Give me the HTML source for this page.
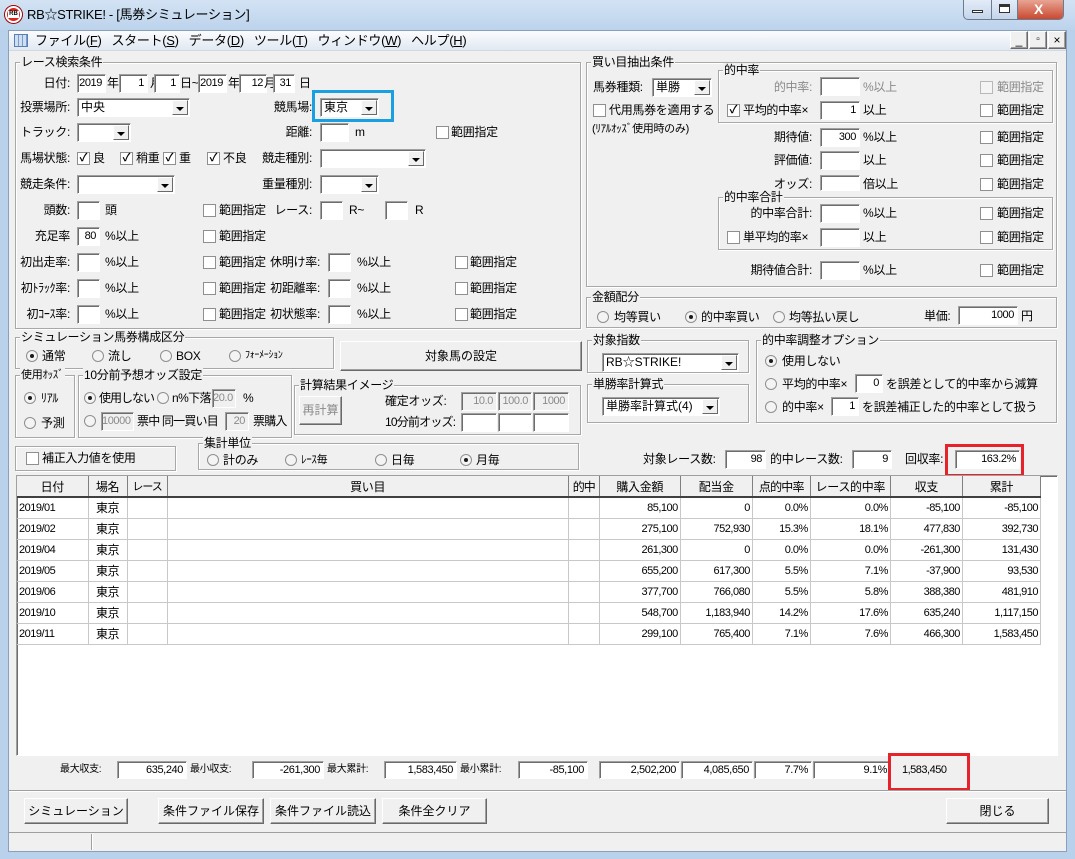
<!DOCTYPE html>
<html><head><meta charset="utf-8">
<style>
*{margin:0;padding:0;box-sizing:border-box}
body{width:1075px;height:859px;overflow:hidden;background:#b9d1ea;font-family:"Liberation Sans","Noto Sans CJK JP",sans-serif;font-size:12px;color:#000;position:relative}
.a{position:absolute}
.t{position:absolute;white-space:nowrap;font-size:12px;line-height:14px;letter-spacing:-0.3px}
.rl{text-align:right}
.gr{color:#8a8a8a}
.b{position:absolute;background:#fff;border:1px solid;border-color:#a0a0a0 #fff #fff #a0a0a0;box-shadow:inset 1px 1px #6d6d6d;text-align:right;padding-right:3px;font-size:11px;line-height:17px;height:19px;white-space:nowrap;letter-spacing:-0.4px;overflow:hidden}
.b.d{background:#f0f0f0;color:#8a8a8a}
.c{position:absolute;background:#fff;border:1px solid;border-color:#a0a0a0 #fff #fff #a0a0a0;box-shadow:inset 1px 1px #6d6d6d;height:19px;padding-left:3px;line-height:17px;font-size:12px;white-space:nowrap}
.c i{position:absolute;right:1px;top:1px;bottom:1px;width:16px;background:#f0f0f0;border:1px solid;border-color:#fff #696969 #696969 #fff}
.c i:after{content:"";position:absolute;left:3px;top:6px;border-left:4px solid transparent;border-right:4px solid transparent;border-top:4px solid #000}
.k{position:absolute;width:13px;height:13px;background:#fff;border:1px solid #8e8f8f;font-size:11px;line-height:11px;text-align:center;font-weight:bold}
.k.d{background:#f4f4f4;border-color:#b8b8b8}
.r{position:absolute;width:12px;height:12px;border-radius:50%;background:#f4f4f4;border:1px solid #8e8f8f}
.r.on:after{content:"";position:absolute;left:3px;top:3px;width:4px;height:4px;border-radius:50%;background:#1a1a1a}
.g{position:absolute;border:1px solid #a8a8a8;box-shadow:1px 1px 0 #fff, inset 1px 1px 0 #fff}
.g>span{position:absolute;top:-8px;left:4px;background:#f0f0f0;padding:0 1px;font-size:12px;line-height:14px;white-space:nowrap;letter-spacing:-0.3px}
.btn{position:absolute;background:#f0f0f0;border:1px solid;border-color:#fff #696969 #696969 #fff;box-shadow:inset -1px -1px #a0a0a0;text-align:center;font-size:12px;white-space:nowrap}
table{border-collapse:collapse;table-layout:fixed}
td,th{height:21px;font-size:11px;font-weight:normal;white-space:nowrap;overflow:hidden;padding:0 2px;letter-spacing:-0.5px}
th{background:#f0f0f0;border-right:1px solid #808080;border-bottom:2px solid #404040;text-align:center;font-size:12px;letter-spacing:-0.3px}
td{border-right:1px solid #c8c8c8;border-bottom:1px solid #c8c8c8;text-align:right}
td.l{text-align:left}
td.cn{text-align:center;font-size:12px}
</style></head><body>
<div class="a" style="left:0;top:0;width:1075px;height:30px;background:linear-gradient(#d3e3f4,#bcd3ec)"></div>
<div class="a" style="left:5px;top:6px;width:17px;height:17px;border-radius:50%;background:#d22;border:2px solid #fff;box-shadow:0 0 0 1px #900"></div>
<div class="a" style="left:8px;top:11px;width:11px;height:7px;background:#fff;font-size:6px;line-height:7px;text-align:center;font-weight:bold">RB</div>
<div class="t" style="left:27px;top:7px;font-size:13px;line-height:16px">RB☆STRIKE! - [馬券シミュレーション]</div>
<div class="a" style="left:963px;top:0;width:101px;height:20px;border:1px solid #6b7c91;border-top:none;border-radius:0 0 5px 5px;overflow:hidden;background:linear-gradient(#e3ecf7,#c4d5ea)">
 <div class="a" style="left:27px;top:0;width:1px;height:20px;background:#6b7c91"></div>
 <div class="a" style="left:53px;top:0;width:1px;height:20px;background:#6b7c91"></div>
 <div class="a" style="left:54px;top:0;width:47px;height:20px;background:linear-gradient(#e8a494,#c7442a)"></div>
 <div class="a" style="left:8px;top:10px;width:11px;height:3px;border:1px solid #333;background:#fff"></div>
 <div class="a" style="left:35px;top:4px;width:11px;height:9px;border:1px solid #333;border-top-width:3px;background:#fff"></div>
 <div class="t" style="left:70px;top:2px;color:#fff;font-weight:bold;font-size:14px">X</div>
</div>
<div class="a" style="left:8px;top:30px;width:1059px;height:822px;background:#f0f0f0;border:1px solid #8aa0b8"></div>
<div class="a" style="left:9px;top:31px;width:1057px;height:20px;background:linear-gradient(#fbfcfe,#e1e8f2);border-bottom:1px solid #d0d8e2"></div>
<div class="a" style="left:14px;top:34px;width:14px;height:13px;border:1px solid #5a7fb5;background:repeating-linear-gradient(90deg,#cfdff2 0 3px,#7a9cc9 3px 4px),#fff"></div>
<div class="t" style="left:35px;top:33px;font-size:13px;line-height:16px">ファイル(<u>F</u>)&nbsp;&nbsp; スタート(<u>S</u>)&nbsp;&nbsp; データ(<u>D</u>)&nbsp;&nbsp; ツール(<u>T</u>)&nbsp;&nbsp; ウィンドウ(<u>W</u>)&nbsp;&nbsp; ヘルプ(<u>H</u>)</div>
<div class="btn" style="left:1010px;top:31px;width:18px;height:18px;line-height:16px">_</div>
<div class="btn" style="left:1029px;top:31px;width:18px;height:18px;line-height:16px;font-size:10px">▫</div>
<div class="btn" style="left:1048px;top:31px;width:18px;height:18px;line-height:16px">×</div>

<div class="g" style="left:15px;top:62px;width:566px;height:267px"><span>レース検索条件</span></div>
<div class="t rl" style="left:10px;width:60px;top:76px">日付:</div>
<div class="b" style="left:77px;top:74px;width:29px">2019</div><div class="t" style="left:107px;top:76px">年</div>
<div class="b" style="left:119px;top:74px;width:29px">1</div><div class="t" style="left:150px;top:76px">月</div>
<div class="b" style="left:154px;top:74px;width:26px">1</div><div class="t" style="left:180px;top:76px">日~</div>
<div class="b" style="left:198px;top:74px;width:29px">2019</div><div class="t" style="left:228px;top:76px">年</div>
<div class="b" style="left:239px;top:74px;width:28px">12</div><div class="t" style="left:264px;top:76px">月</div>
<div class="b" style="left:273px;top:74px;width:22px">31</div><div class="t" style="left:299px;top:76px">日</div>

<div class="t rl" style="left:10px;width:60px;top:100px">投票場所:</div>
<div class="c" style="left:77px;top:98px;width:113px">中央<i></i></div>
<div class="t rl" style="left:250px;width:62px;top:100px">競馬場:</div>
<div class="c" style="left:320px;top:98px;width:59px">東京<i></i></div>
<div class="a" style="left:312px;top:90px;width:82px;height:32px;border:3px solid #1a9fe0"></div>

<div class="t rl" style="left:10px;width:60px;top:125px">トラック:</div>
<div class="c" style="left:77px;top:123px;width:54px"><i></i></div>
<div class="t rl" style="left:250px;width:62px;top:125px">距離:</div>
<div class="b" style="left:320px;top:123px;width:29px"></div><div class="t" style="left:355px;top:125px">m</div>
<div class="k" style="left:436px;top:126px"></div><div class="t" style="left:451px;top:125px">範囲指定</div>

<div class="t rl" style="left:10px;width:60px;top:151px">馬場状態:</div>
<div class="k" style="left:77px;top:152px">✓</div><div class="t" style="left:93px;top:151px">良</div>
<div class="k" style="left:120px;top:152px">✓</div><div class="t" style="left:136px;top:151px">稍重</div>
<div class="k" style="left:163px;top:152px">✓</div><div class="t" style="left:179px;top:151px">重</div>
<div class="k" style="left:207px;top:152px">✓</div><div class="t" style="left:223px;top:151px">不良</div>
<div class="t rl" style="left:250px;width:62px;top:151px">競走種別:</div>
<div class="c" style="left:320px;top:149px;width:106px"><i></i></div>

<div class="t rl" style="left:10px;width:60px;top:177px">競走条件:</div>
<div class="c" style="left:77px;top:175px;width:98px"><i></i></div>
<div class="t rl" style="left:250px;width:62px;top:177px">重量種別:</div>
<div class="c" style="left:320px;top:175px;width:59px"><i></i></div>

<div class="t rl" style="left:10px;width:60px;top:203px">頭数:</div>
<div class="b" style="left:77px;top:201px;width:23px"></div><div class="t" style="left:105px;top:203px">頭</div>
<div class="k" style="left:203px;top:204px"></div><div class="t" style="left:219px;top:203px">範囲指定</div>
<div class="t rl" style="left:250px;width:62px;top:203px">レース:</div>
<div class="b" style="left:320px;top:201px;width:23px"></div><div class="t" style="left:349px;top:203px">R~</div>
<div class="b" style="left:385px;top:201px;width:23px"></div><div class="t" style="left:415px;top:203px">R</div>

<div class="t rl" style="left:10px;width:60px;top:229px">充足率</div>
<div class="b" style="left:77px;top:227px;width:23px">80</div><div class="t" style="left:105px;top:229px">%以上</div>
<div class="k" style="left:203px;top:230px"></div><div class="t" style="left:219px;top:229px">範囲指定</div>

<div class="t rl" style="left:10px;width:60px;top:255px">初出走率:</div>
<div class="b" style="left:77px;top:253px;width:23px"></div><div class="t" style="left:105px;top:255px">%以上</div>
<div class="k" style="left:203px;top:256px"></div><div class="t" style="left:219px;top:255px">範囲指定</div>
<div class="t rl" style="left:258px;width:62px;top:255px">休明け率:</div>
<div class="b" style="left:328px;top:253px;width:23px"></div><div class="t" style="left:357px;top:255px">%以上</div>
<div class="k" style="left:455px;top:256px"></div><div class="t" style="left:470px;top:255px">範囲指定</div>

<div class="t rl" style="left:10px;width:60px;top:281px">初ﾄﾗｯｸ率:</div>
<div class="b" style="left:77px;top:279px;width:23px"></div><div class="t" style="left:105px;top:281px">%以上</div>
<div class="k" style="left:203px;top:282px"></div><div class="t" style="left:219px;top:281px">範囲指定</div>
<div class="t rl" style="left:258px;width:62px;top:281px">初距離率:</div>
<div class="b" style="left:328px;top:279px;width:23px"></div><div class="t" style="left:357px;top:281px">%以上</div>
<div class="k" style="left:455px;top:282px"></div><div class="t" style="left:470px;top:281px">範囲指定</div>

<div class="t rl" style="left:10px;width:60px;top:307px">初ｺｰｽ率:</div>
<div class="b" style="left:77px;top:305px;width:23px"></div><div class="t" style="left:105px;top:307px">%以上</div>
<div class="k" style="left:203px;top:308px"></div><div class="t" style="left:219px;top:307px">範囲指定</div>
<div class="t rl" style="left:258px;width:62px;top:307px">初状態率:</div>
<div class="b" style="left:328px;top:305px;width:23px"></div><div class="t" style="left:357px;top:307px">%以上</div>
<div class="k" style="left:455px;top:308px"></div><div class="t" style="left:470px;top:307px">範囲指定</div>

<div class="g" style="left:586px;top:62px;width:471px;height:225px"><span>買い目抽出条件</span></div>
<div class="t" style="left:593px;top:80px">馬券種類:</div>
<div class="c" style="left:652px;top:78px;width:60px">単勝<i></i></div>
<div class="k" style="left:593px;top:104px"></div><div class="t" style="left:609px;top:103px">代用馬券を適用する</div>
<div class="t" style="left:592px;top:122px;font-size:11px">(ﾘｱﾙｵｯｽﾞ使用時のみ)</div>
<div class="g" style="left:718px;top:70px;width:335px;height:53px"><span>的中率</span></div>
<div class="g" style="left:718px;top:197px;width:335px;height:53px"><span>的中率合計</span></div>
<div class="t rl gr" style="left:740px;width:72px;top:80px">的中率:</div>
<div class="b d" style="left:820px;top:77px;width:40px;background:#fff"></div><div class="t gr" style="left:863px;top:80px">%以上</div>
<div class="k d" style="left:980px;top:81px"></div><div class="t gr" style="left:997px;top:80px">範囲指定</div>
<div class="k" style="left:727px;top:104px">✓</div><div class="t" style="left:743px;top:103px">平均的中率×</div>
<div class="b" style="left:820px;top:101px;width:40px">1</div><div class="t" style="left:863px;top:103px">以上</div>
<div class="k" style="left:980px;top:104px"></div><div class="t" style="left:997px;top:103px">範囲指定</div>
<div class="t rl" style="left:740px;width:72px;top:130px">期待値:</div>
<div class="b" style="left:820px;top:128px;width:40px">300</div><div class="t" style="left:863px;top:130px">%以上</div>
<div class="k" style="left:980px;top:131px"></div><div class="t" style="left:997px;top:130px">範囲指定</div>
<div class="t rl" style="left:740px;width:72px;top:153px">評価値:</div>
<div class="b" style="left:820px;top:151px;width:40px"></div><div class="t" style="left:863px;top:153px">以上</div>
<div class="k" style="left:980px;top:154px"></div><div class="t" style="left:997px;top:153px">範囲指定</div>
<div class="t rl" style="left:740px;width:72px;top:177px">オッズ:</div>
<div class="b" style="left:820px;top:175px;width:40px;height:16px"></div><div class="t" style="left:863px;top:177px">倍以上</div>
<div class="k" style="left:980px;top:178px"></div><div class="t" style="left:997px;top:177px">範囲指定</div>
<div class="t rl" style="left:740px;width:72px;top:206px">的中率合計:</div>
<div class="b" style="left:820px;top:204px;width:40px"></div><div class="t" style="left:863px;top:206px">%以上</div>
<div class="k" style="left:980px;top:207px"></div><div class="t" style="left:997px;top:206px">範囲指定</div>
<div class="k" style="left:727px;top:231px"></div><div class="t" style="left:743px;top:230px">単平均的率×</div>
<div class="b" style="left:820px;top:228px;width:40px"></div><div class="t" style="left:863px;top:230px">以上</div>
<div class="k" style="left:980px;top:231px"></div><div class="t" style="left:997px;top:230px">範囲指定</div>
<div class="t rl" style="left:740px;width:72px;top:263px">期待値合計:</div>
<div class="b" style="left:820px;top:261px;width:40px"></div><div class="t" style="left:863px;top:263px">%以上</div>
<div class="k" style="left:980px;top:264px"></div><div class="t" style="left:997px;top:263px">範囲指定</div>

<div class="g" style="left:586px;top:297px;width:471px;height:31px"><span>金額配分</span></div>
<div class="r" style="left:597px;top:311px"></div><div class="t" style="left:614px;top:310px">均等買い</div>
<div class="r on" style="left:685px;top:311px"></div><div class="t" style="left:701px;top:310px">的中率買い</div>
<div class="r" style="left:773px;top:311px"></div><div class="t" style="left:789px;top:310px">均等払い戻し</div>
<div class="t" style="left:924px;top:309px">単価:</div>
<div class="b" style="left:958px;top:306px;width:60px">1000</div><div class="t" style="left:1021px;top:309px">円</div>

<div class="g" style="left:15px;top:337px;width:319px;height:32px"><span>シミュレーション馬券構成区分</span></div>
<div class="r on" style="left:26px;top:350px"></div><div class="t" style="left:42px;top:349px">通常</div>
<div class="r" style="left:92px;top:350px"></div><div class="t" style="left:108px;top:349px">流し</div>
<div class="r" style="left:160px;top:350px"></div><div class="t" style="left:176px;top:349px">BOX</div>
<div class="r" style="left:229px;top:350px"></div><div class="t" style="left:245px;top:349px;font-size:10px">ﾌｫｰﾒｰｼｮﾝ</div>
<div class="btn" style="left:340px;top:341px;width:242px;height:30px;line-height:28px">対象馬の設定</div>

<div class="g" style="left:15px;top:375px;width:60px;height:63px"><span style="font-size:11px">使用ｵｯｽﾞ</span></div>
<div class="r on" style="left:24px;top:392px"></div><div class="t" style="left:41px;top:391px">ﾘｱﾙ</div>
<div class="r" style="left:24px;top:417px"></div><div class="t" style="left:41px;top:416px">予測</div>

<div class="g" style="left:78px;top:375px;width:214px;height:63px"><span>10分前予想オッズ設定</span></div>
<div class="r on" style="left:84px;top:392px"></div><div class="t" style="left:99px;top:391px;letter-spacing:-1px">使用しない</div>
<div class="r" style="left:157px;top:392px"></div><div class="t" style="left:172px;top:391px;letter-spacing:-0.6px">n%下落</div>
<div class="b d" style="left:212px;top:389px;width:24px">20.0</div><div class="t" style="left:243px;top:391px">%</div>
<div class="r" style="left:84px;top:415px"></div>
<div class="b d" style="left:101px;top:412px;width:33px">10000</div><div class="t" style="left:137px;top:414px;letter-spacing:-0.8px">票中 同一買い目</div>
<div class="b d" style="left:225px;top:412px;width:24px">20</div><div class="t" style="left:253px;top:414px;letter-spacing:-0.8px">票購入</div>

<div class="g" style="left:294px;top:385px;width:287px;height:50px"><span>計算結果イメージ</span></div>
<div class="btn" style="left:299px;top:396px;width:43px;height:29px;line-height:27px;color:#8a8a8a">再計算</div>
<div class="t" style="left:385px;top:394px">確定オッズ:</div>
<div class="b d" style="left:461px;top:392px;width:36px">10.0</div>
<div class="b d" style="left:498px;top:392px;width:34px">100.0</div>
<div class="b d" style="left:533px;top:392px;width:36px">1000</div>
<div class="t" style="left:385px;top:415px;letter-spacing:-0.8px">10分前オッズ:</div>
<div class="b" style="left:461px;top:413px;width:36px"></div>
<div class="b" style="left:498px;top:413px;width:34px"></div>
<div class="b" style="left:533px;top:413px;width:36px"></div>

<div class="g" style="left:15px;top:446px;width:161px;height:25px"></div>
<div class="k" style="left:26px;top:452px"></div><div class="t" style="left:42px;top:451px">補正入力値を使用</div>

<div class="g" style="left:198px;top:443px;width:381px;height:27px"><span>集計単位</span></div>
<div class="r" style="left:207px;top:454px"></div><div class="t" style="left:223px;top:453px">計のみ</div>
<div class="r" style="left:285px;top:454px"></div><div class="t" style="left:301px;top:453px;font-size:11px">ﾚｰｽ毎</div>
<div class="r" style="left:375px;top:454px"></div><div class="t" style="left:391px;top:453px">日毎</div>
<div class="r on" style="left:460px;top:454px"></div><div class="t" style="left:476px;top:453px">月毎</div>

<div class="g" style="left:587px;top:340px;width:162px;height:33px"><span>対象指数</span></div>
<div class="c" style="left:602px;top:353px;width:137px">RB☆STRIKE!<i></i></div>
<div class="g" style="left:587px;top:384px;width:162px;height:39px"><span>単勝率計算式</span></div>
<div class="c" style="left:602px;top:397px;width:118px">単勝率計算式(4)<i></i></div>
<div class="g" style="left:756px;top:340px;width:301px;height:83px"><span>的中率調整オプション</span></div>
<div class="r on" style="left:765px;top:355px"></div><div class="t" style="left:782px;top:354px">使用しない</div>
<div class="r" style="left:765px;top:378px"></div><div class="t" style="left:782px;top:377px">平均的中率×</div>
<div class="b" style="left:855px;top:374px;width:28px">0</div><div class="t" style="left:886px;top:377px">を誤差として的中率から減算</div>
<div class="r" style="left:765px;top:401px"></div><div class="t" style="left:782px;top:400px">的中率×</div>
<div class="b" style="left:831px;top:397px;width:28px">1</div><div class="t" style="left:862px;top:400px">を誤差補正した的中率として扱う</div>

<div class="t" style="left:643px;top:452px">対象レース数:</div>
<div class="b" style="left:725px;top:450px;width:41px">98</div>
<div class="t" style="left:770px;top:452px">的中レース数:</div>
<div class="b" style="left:852px;top:450px;width:40px">9</div>
<div class="t" style="left:905px;top:452px">回収率:</div>
<div class="b" style="left:955px;top:450px;width:65px">163.2%</div>
<div class="a" style="left:945px;top:444px;width:79px;height:33px;border:3px solid #e6232a"></div>

<div class="a" style="left:16px;top:475px;width:1042px;height:281px;background:#fff;border:1px solid;border-color:#a0a0a0 #fff #fff #a0a0a0;box-shadow:inset 1px 1px #6d6d6d"></div>
<table class="a" style="left:17px;top:476px;width:1024px">
<colgroup><col style="width:71px"><col style="width:39px"><col style="width:40px"><col style="width:401px"><col style="width:31px"><col style="width:81px"><col style="width:72px"><col style="width:58px"><col style="width:80px"><col style="width:72px"><col style="width:78px"></colgroup>
<tr><th>日付</th><th>場名</th><th style="font-size:11px;letter-spacing:-1px">レース</th><th>買い目</th><th style="letter-spacing:-1px">的中</th><th>購入金額</th><th>配当金</th><th style="letter-spacing:-0.8px">点的中率</th><th>レース的中率</th><th>収支</th><th>累計</th></tr>
<tr><td class="l">2019/01</td><td class="cn">東京</td><td></td><td></td><td></td><td>85,100</td><td>0</td><td>0.0%</td><td>0.0%</td><td>-85,100</td><td>-85,100</td></tr>
<tr><td class="l">2019/02</td><td class="cn">東京</td><td></td><td></td><td></td><td>275,100</td><td>752,930</td><td>15.3%</td><td>18.1%</td><td>477,830</td><td>392,730</td></tr>
<tr><td class="l">2019/04</td><td class="cn">東京</td><td></td><td></td><td></td><td>261,300</td><td>0</td><td>0.0%</td><td>0.0%</td><td>-261,300</td><td>131,430</td></tr>
<tr><td class="l">2019/05</td><td class="cn">東京</td><td></td><td></td><td></td><td>655,200</td><td>617,300</td><td>5.5%</td><td>7.1%</td><td>-37,900</td><td>93,530</td></tr>
<tr><td class="l">2019/06</td><td class="cn">東京</td><td></td><td></td><td></td><td>377,700</td><td>766,080</td><td>5.5%</td><td>5.8%</td><td>388,380</td><td>481,910</td></tr>
<tr><td class="l">2019/10</td><td class="cn">東京</td><td></td><td></td><td></td><td>548,700</td><td>1,183,940</td><td>14.2%</td><td>17.6%</td><td>635,240</td><td>1,117,150</td></tr>
<tr><td class="l">2019/11</td><td class="cn">東京</td><td></td><td></td><td></td><td>299,100</td><td>765,400</td><td>7.1%</td><td>7.6%</td><td>466,300</td><td>1,583,450</td></tr>
</table>

<div class="t" style="left:60px;top:763px;font-size:10px">最大収支:</div>
<div class="b" style="left:117px;top:761px;width:70px;height:18px;line-height:16px">635,240</div>
<div class="t" style="left:190px;top:763px;font-size:10px">最小収支:</div>
<div class="b" style="left:252px;top:761px;width:72px;height:18px;line-height:16px">-261,300</div>
<div class="t" style="left:327px;top:763px;font-size:10px">最大累計:</div>
<div class="b" style="left:384px;top:761px;width:73px;height:18px;line-height:16px">1,583,450</div>
<div class="t" style="left:460px;top:763px;font-size:10px">最小累計:</div>
<div class="b" style="left:518px;top:761px;width:70px;height:18px;line-height:16px">-85,100</div>
<div class="b" style="left:599px;top:761px;width:81px;height:18px;line-height:16px">2,502,200</div>
<div class="b" style="left:681px;top:761px;width:72px;height:18px;line-height:16px">4,085,650</div>
<div class="b" style="left:754px;top:761px;width:58px;height:18px;line-height:16px">7.7%</div>
<div class="b" style="left:813px;top:761px;width:78px;height:18px;line-height:16px">9.1%</div>
<div class="t" style="left:902px;top:763px;font-size:11px;letter-spacing:-0.5px">1,583,450</div>
<div class="a" style="left:888px;top:753px;width:82px;height:38px;border:3px solid #e6232a"></div>

<div class="a" style="left:9px;top:790px;width:1057px;height:2px;border-top:1px solid #a0a0a0;border-bottom:1px solid #fff"></div>
<div class="btn" style="left:24px;top:798px;width:104px;height:26px;line-height:24px">シミュレーション</div>
<div class="btn" style="left:158px;top:798px;width:106px;height:26px;line-height:24px">条件ファイル保存</div>
<div class="btn" style="left:270px;top:798px;width:106px;height:26px;line-height:24px">条件ファイル読込</div>
<div class="btn" style="left:382px;top:798px;width:105px;height:26px;line-height:24px">条件全クリア</div>
<div class="btn" style="left:946px;top:798px;width:103px;height:26px;line-height:24px">閉じる</div>

<div class="a" style="left:9px;top:832px;width:1057px;height:1px;background:#a0a0a0"></div>
<div class="a" style="left:91px;top:834px;width:2px;height:16px;border-left:1px solid #a0a0a0;border-right:1px solid #fff"></div>
</body></html>
